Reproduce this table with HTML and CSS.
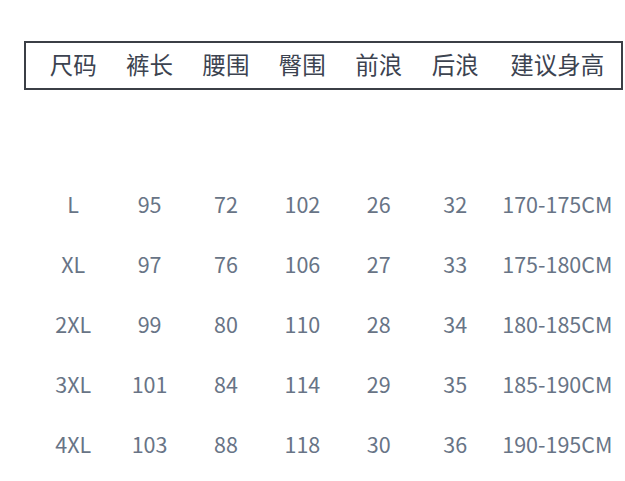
FILE: index.html
```html
<!DOCTYPE html>
<html lang="zh">
<head>
<meta charset="utf-8">
<title>尺码表</title>
<link rel="stylesheet" href="styles.css">
</head>
<body>
<div class="chart">
  <div class="head">
    <span>尺码</span><span>裤长</span><span>腰围</span><span>臀围</span><span>前浪</span><span>后浪</span><span>建议身高</span>
  </div>
  <div class="rows">
    <div class="row"><span>L</span><span>95</span><span>72</span><span>102</span><span>26</span><span>32</span><span>170-175CM</span></div>
    <div class="row"><span>XL</span><span>97</span><span>76</span><span>106</span><span>27</span><span>33</span><span>175-180CM</span></div>
    <div class="row"><span>2XL</span><span>99</span><span>80</span><span>110</span><span>28</span><span>34</span><span>180-185CM</span></div>
    <div class="row"><span>3XL</span><span>101</span><span>84</span><span>114</span><span>29</span><span>35</span><span>185-190CM</span></div>
    <div class="row"><span>4XL</span><span>103</span><span>88</span><span>118</span><span>30</span><span>36</span><span>190-195CM</span></div>
  </div>
</div>
</body>
</html>
```
FILE: styles.css
```css
html, body {
  margin: 0;
  background: #ffffff;
}
body {
  font-family: "Noto Sans CJK SC", "Noto Sans", sans-serif;
}
.chart {
  margin: 41px 0 0 24px;
  width: 599px;
}
.head, .row {
  display: grid;
  grid-template-columns: repeat(6, 76.4px) 128px;
  align-items: center;
  justify-items: center;
  box-sizing: border-box;
}
.head {
  height: 49px;
  border: 2px solid #3b3f46;
  padding-left: 9px;
  padding-bottom: 1px;
  font-size: 23.5px;
  color: #3c4350;
}
.rows {
  margin-top: 84px;
}
.row {
  height: 60px;
  padding-left: 11px;
  font-size: 21.5px;
  color: #687486;
}
.head span, .row span {
  white-space: nowrap;
  line-height: 1;
}
```
